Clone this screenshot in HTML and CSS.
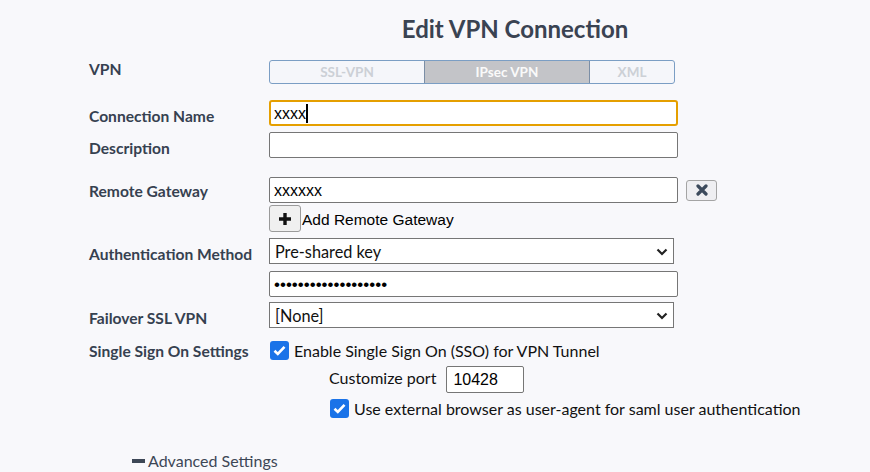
FILE: index.html
```html
<!DOCTYPE html>
<html lang="en">
<head>
    <meta charset="UTF-8">
    <title>Edit VPN Connection</title>
    <link rel="stylesheet" href="styles.css">
</head>
<body>
    <h1>Edit VPN Connection</h1>
    <form class="vpn-form">
        <div class="row row-vpn">
            <label>VPN</label>
            <div class="toggle">
                <span class="seg seg-ssl">SSL-VPN</span>
                <span class="seg seg-ipsec active">IPsec VPN</span>
                <span class="seg seg-xml">XML</span>
            </div>
        </div>
        <div class="row row-name">
            <label for="name">Connection Name</label>
            <div class="caret-wrap">
                <input type="text" id="name" class="field focused" value="xxxx">
                <span class="caret"></span>
            </div>
        </div>
        <div class="row row-desc">
            <label for="desc">Description</label>
            <input type="text" id="desc" class="field">
        </div>
        <div class="row row-gw">
            <label for="gw">Remote Gateway</label>
            <div class="gw-box">
                <div class="gw-line">
                    <input type="text" id="gw" class="field" value="xxxxxx">
                    <button type="button" class="btn-remove">
                        <svg width="12" height="12" viewBox="0 0 12 12"><path d="M2 2L10 10M10 2L2 10" stroke="#3c4a5c" stroke-width="3.2" stroke-linecap="round"/></svg>
                    </button>
                </div>
                <div class="add-line">
                    <button type="button" class="btn-add">
                        <svg width="14" height="14" viewBox="0 0 14 14"><path d="M7 1V13M1 7H13" stroke="#111" stroke-width="3.4"/></svg>
                    </button>
                    <span>Add Remote Gateway</span>
                </div>
            </div>
        </div>
        <div class="row row-auth">
            <label for="auth">Authentication Method</label>
            <div class="select-wrap">
                <select id="auth" class="select"><option>Pre-shared key</option></select>
                <svg class="chevron" width="12" height="8" viewBox="0 0 12 8"><path d="M1.5 1.5L6 6L10.5 1.5" stroke="#222" stroke-width="2.2" fill="none"/></svg>
            </div>
        </div>
        <div class="row row-psk">
            <label></label>
            <input type="password" class="field pwd" value="xxxxxxxxxxxxxxxxxxx">
        </div>
        <div class="row row-failover">
            <label for="failover">Failover SSL VPN</label>
            <div class="select-wrap">
                <select id="failover" class="select"><option>[None]</option></select>
                <svg class="chevron" width="12" height="8" viewBox="0 0 12 8"><path d="M1.5 1.5L6 6L10.5 1.5" stroke="#222" stroke-width="2.2" fill="none"/></svg>
            </div>
        </div>
        <div class="row row-sso">
            <label>Single Sign On Settings</label>
            <div class="sso-box">
                <div class="check-line">
                    <span class="check"><svg width="13" height="11" viewBox="0 0 13 11"><path d="M1.5 5.8L4.8 9L11.5 1.8" stroke="#fff" stroke-width="2.6" fill="none"/></svg></span>
                    <span>Enable Single Sign On (SSO) for VPN Tunnel</span>
                </div>
                <div class="sub">
                    <div class="port-line">
                        <span>Customize port</span>
                        <input type="text" class="field port" value="10428">
                    </div>
                    <div class="check-line">
                        <span class="check"><svg width="13" height="11" viewBox="0 0 13 11"><path d="M1.5 5.8L4.8 9L11.5 1.8" stroke="#fff" stroke-width="2.6" fill="none"/></svg></span>
                        <span>Use external browser as user-agent for saml user authentication</span>
                    </div>
                </div>
            </div>
        </div>
    </form>
    <div class="advanced">
        <span class="minus"></span>
        <span>Advanced Settings</span>
    </div>
</body>
</html>
```

FILE: styles.css
```css
body {
    margin: 0;
    background: #f8f8fb;
    font-family: Lato, "Open Sans", sans-serif;
    color: #364150;
}
h1 {
    margin: 0;
    padding-top: 14px;
    height: 36px;
    text-align: center;
    padding-left: 160px;
    font-size: 24px;
    font-weight: bold;
    color: #3a4352;
    line-height: 30px;
}
.vpn-form {
    padding-left: 89px;
    margin-top: 10px;
}
.row {
    display: flex;
    align-items: flex-start;
}
.row label {
    width: 180px;
    flex: none;
    font-size: 15.6px;
    font-weight: bold;
    line-height: 18px;
    padding-top: 7px;
}
.row-vpn label {
    padding-top: 0;
}
.row-gw label {
    padding-top: 5px;
}
.row-name { margin-top: 16px; }
.row-desc { margin-top: 6px; }
.row-gw { margin-top: 19px; }
.row-auth { margin-top: 6px; }
.row-psk { margin-top: 7px; }
.row-failover { margin-top: 5px; }
.row-sso { margin-top: 12px; }
.row-sso label {
    padding-top: 2px;
}

.toggle {
    display: flex;
    width: 406px;
    height: 24px;
    border: 1px solid #7b9ec4;
    border-radius: 3px;
    box-sizing: border-box;
    overflow: hidden;
    background: #f5f6fa;
}
.seg {
    display: flex;
    align-items: center;
    justify-content: center;
    font-size: 13.5px;
    font-weight: bold;
    color: #ccd0d6;
}
.seg-ssl {
    width: 154px;
    border-right: 1px solid #7b8ea6;
}
.seg-ipsec {
    width: 164px;
}
.seg-xml {
    flex: 1;
    border-left: 1px solid #7b8ea6;
}
.seg.active {
    background: #c3c4c8;
    color: #fafafa;
}

.field {
    width: 409px;
    height: 26px;
    box-sizing: border-box;
    border: 1px solid #767676;
    border-radius: 2px;
    background: #fff;
    padding: 1px 4px 0;
    font-family: "Liberation Sans", Arial, sans-serif;
    font-size: 16px;
    color: #000;
    outline: none;
}
.field.focused {
    border: 2px solid #e59f00;
    border-radius: 3px;
    padding-left: 3px;
}
.field.pwd {
    font-size: 17px;
}
.caret-wrap {
    position: relative;
}
/* text cursor at the end of the focused value */
.caret {
    position: absolute;
    left: 37px;
    top: 4px;
    width: 2px;
    height: 19px;
    background: #000;
}

.gw-line {
    display: flex;
    align-items: center;
    gap: 8px;
}
.btn-remove {
    width: 31px;
    height: 21px;
    border: 1px solid #a4a4a4;
    border-radius: 3px;
    background: #efeff2;
    display: flex;
    align-items: center;
    justify-content: center;
    padding: 0;
}
.add-line {
    display: flex;
    align-items: center;
    gap: 1px;
    margin-top: 2px;
    font-family: "Liberation Sans", Arial, sans-serif;
    font-size: 15.5px;
    color: #000;
}
.add-line span {
    padding-top: 2px;
}
.btn-add {
    width: 32px;
    height: 27px;
    border: 1px solid #9a9a9a;
    border-radius: 3px;
    background: #f0f0f0;
    display: flex;
    align-items: center;
    justify-content: center;
    padding: 0;
}

.select-wrap {
    position: relative;
    width: 405px;
}
.select {
    appearance: none;
    width: 405px;
    height: 26px;
    box-sizing: border-box;
    border: 1px solid #767676;
    border-radius: 0;
    background: #fff;
    padding: 0 5px;
    font-family: Lato, sans-serif;
    font-size: 16.3px;
    color: #111;
}
.chevron {
    position: absolute;
    right: 6px;
    top: 10px;
}

.sso-box {
    font-size: 16px;
    color: #111;
}
.check-line {
    display: flex;
    align-items: center;
    gap: 5px;
    height: 20px;
}
.check {
    width: 19px;
    height: 19px;
    flex: none;
    border-radius: 3px;
    background: #1a73e8;
    display: flex;
    align-items: center;
    justify-content: center;
}
.row-sso .check-line:first-child .check {
    margin-left: 1px;
}
.sub {
    padding-left: 60px;
}
.port-line {
    display: flex;
    align-items: flex-start;
    gap: 10px;
    margin-top: 6px;
    height: 27px;
}
.port-line span {
    padding-top: 2px;
}
.field.port {
    width: 78px;
    height: 27px;
    font-size: 16px;
    padding-left: 6px;
}
.sub .check-line {
    margin-top: 5px;
    margin-left: 1px;
}

.advanced {
    display: flex;
    align-items: center;
    gap: 3px;
    padding-left: 132px;
    margin-top: 33px;
    font-size: 16px;
    color: #3d4756;
}
.minus {
    width: 13px;
    height: 4px;
    background: #3d4756;
}
```
